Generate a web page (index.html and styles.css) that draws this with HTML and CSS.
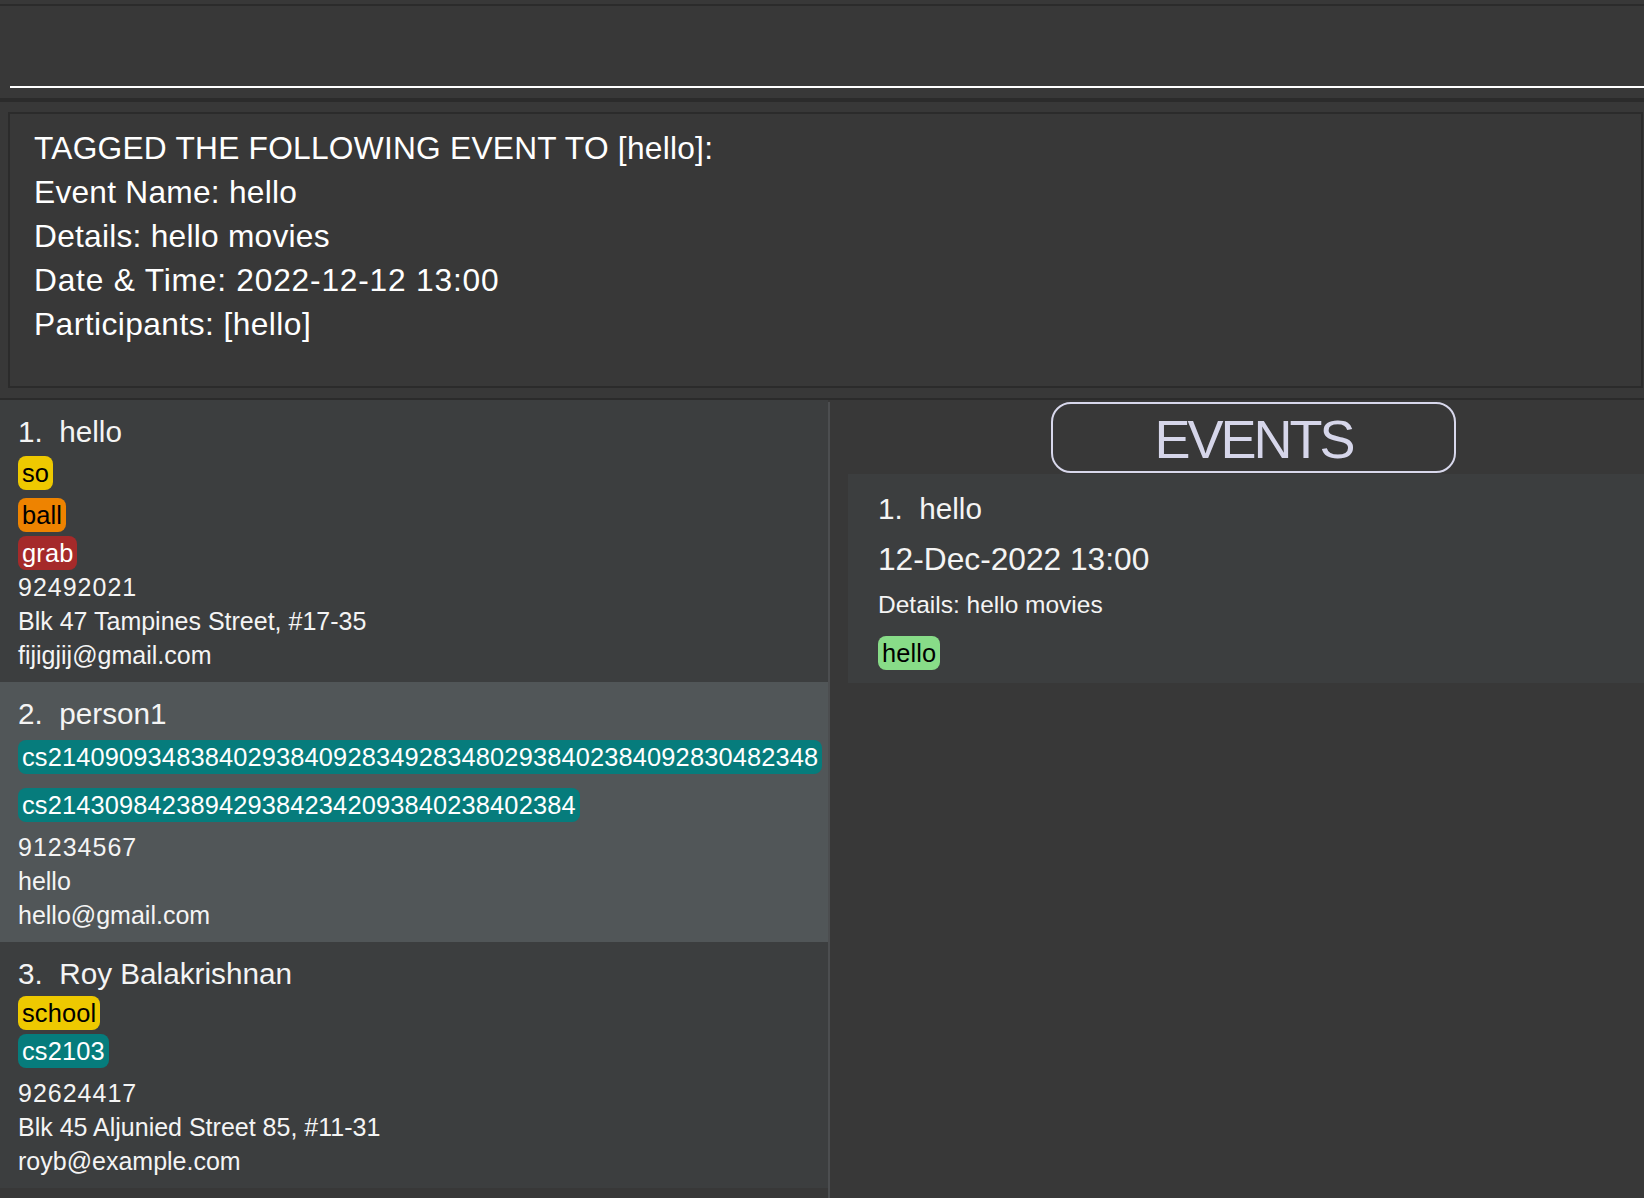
FILE: index.html
```html
<!DOCTYPE html>
<html lang="en">
<head>
<meta charset="utf-8">
<title>Address Book</title>
<link rel="stylesheet" href="styles.css">
</head>
<body>
  <div class="topbar"></div>
  <div class="command">
    <div class="command-input"></div>
  </div>
  <div class="band"></div>
  <div class="result-wrap">
    <div class="result">
      <div>TAGGED THE FOLLOWING EVENT TO [hello]:</div>
      <div>Event Name: hello</div>
      <div>Details: hello movies</div>
      <div class="result-date">Date &amp; Time: 2022-12-12 13:00</div>
      <div class="result-wide">Participants: [hello]</div>
    </div>
  </div>
  <div class="band-thin"></div>
  <div class="main">
    <div class="person-list">
      <div class="person person--even">
        <div class="name">1.  hello</div>
        <div class="tags tags--flush">
          <span class="tag tag--yellow">so</span>
          <span class="tag tag--orange tag--spaced">ball</span>
          <span class="tag tag--red">grab</span>
        </div>
        <div class="field field--phone">92492021</div>
        <div class="field">Blk 47 Tampines Street, #17-35</div>
        <div class="field">fijigjij@gmail.com</div>
      </div>
      <div class="person person--odd">
        <div class="name">2.  person1</div>
        <div class="tags tags--loose">
          <span class="tag tag--teal">cs214090934838402938409283492834802938402384092830482348</span>
          <span class="tag tag--teal">cs2143098423894293842342093840238402384</span>
        </div>
        <div class="field field--phone">91234567</div>
        <div class="field">hello</div>
        <div class="field">hello@gmail.com</div>
      </div>
      <div class="person person--even">
        <div class="name">3.  Roy Balakrishnan</div>
        <div class="tags tags--close">
          <span class="tag tag--yellow">school</span>
          <span class="tag tag--teal">cs2103</span>
        </div>
        <div class="field field--phone">92624417</div>
        <div class="field">Blk 45 Aljunied Street 85, #11-31</div>
        <div class="field">royb@example.com</div>
      </div>
    </div>
    <div class="divider"></div>
    <div class="event-pane">
      <div class="events-title">EVENTS</div>
      <div class="event-card">
        <div class="name">1.  hello</div>
        <div class="event-date">12-Dec-2022 13:00</div>
        <div class="event-details">Details: hello movies</div>
        <div class="event-tags">
          <span class="tag tag--green">hello</span>
        </div>
      </div>
    </div>
  </div>
</body>
</html>
```

FILE: styles.css
```css
* {
  box-sizing: border-box;
  margin: 0;
  padding: 0;
}

html, body {
  background: #383838;
}

body {
  width: 1644px;
  height: 1198px;
  overflow: hidden;
  display: flex;
  flex-direction: column;
  font-family: "Liberation Sans", Arial, sans-serif;
  color: #ffffff;
}

.topbar {
  height: 6px;
  flex: none;
  border-bottom: 2px solid #2b2b2b;
}

.command {
  height: 92px;
  flex: none;
  padding: 0 0 10px 10px;
}

.command-input {
  height: 82px;
  border-bottom: 2px solid #ffffff;
}

.band {
  height: 4px;
  flex: none;
  background: #2b2b2b;
}

.band-thin {
  height: 2px;
  flex: none;
  background: #2b2b2b;
}

.result-wrap {
  flex: none;
  padding: 10px 1px 10px 8px;
}

.result {
  height: 276px;
  border: 2px solid #2b2b2b;
  padding: 12px 24px;
  font-size: 31.7px;
  line-height: 44px;
  letter-spacing: 0.25px;
  color: #ffffff;
}

.result-date {
  letter-spacing: 0.8px;
}

.result-wide {
  letter-spacing: 0.45px;
}

.main {
  flex: 1;
  min-height: 0;
  display: flex;
}

.person-list {
  width: 828px;
  flex: none;
  display: flex;
  flex-direction: column;
}

.divider {
  width: 2px;
  flex: none;
  margin-top: 2px;
  background: #4c4e50;
}

.person {
  padding: 12px 18px 10px;
}

.person--even {
  background: #3c3e3f;
}

.person--odd {
  background: #515658;
}

.name {
  font-size: 29.7px;
  line-height: 40px;
  white-space: pre;
  color: #f4f4f4;
}

.tags {
  display: flex;
  flex-direction: column;
  align-items: flex-start;
  gap: 4px;
  margin: 4px 0 8px;
}

.tags--flush {
  margin-bottom: 0;
}

.tags--loose {
  margin-top: 6px;
  gap: 14px;
}

.tags--close {
  margin-top: 2px;
}

.tag {
  display: inline-block;
  height: 34px;
  line-height: 34px;
  padding: 0 4px;
  border-radius: 8px;
  font-size: 25.4px;
  letter-spacing: 0.15px;
  white-space: nowrap;
}

.tag--spaced {
  margin-top: 4px;
}

.tag--yellow {
  background: #eec900;
  color: #000000;
}

.tag--orange {
  background: #ee8300;
  color: #000000;
}

.tag--red {
  background: #a52a2a;
  color: #ffffff;
}

.tag--teal {
  background: #067c7c;
  color: #ffffff;
}

.tag--green {
  background: #88dc88;
  color: #000000;
}

.field {
  font-size: 25px;
  line-height: 34px;
  color: #f4f4f4;
}

.field--phone {
  letter-spacing: 1px;
}

.event-pane {
  flex: 1;
  padding-top: 2px;
}

.events-title {
  margin-left: 221px;
  width: 405px;
  height: 71px;
  border: 2px solid #d8d8ec;
  border-radius: 20px;
  padding-top: 3px;
  text-align: center;
  font-size: 54px;
  line-height: 64px;
  letter-spacing: -3px;
  color: #d6d6ea;
}

.event-card {
  margin: 1px 0 0 18px;
  padding: 15px 30px 13px;
  background: #3c3e3f;
}

.event-date {
  margin-top: 8px;
  font-size: 31.7px;
  line-height: 44px;
  color: #f4f4f4;
}

.event-details {
  margin-top: 7px;
  font-size: 24.5px;
  line-height: 34px;
  color: #f4f4f4;
}

.event-tags {
  margin-top: 14px;
  display: flex;
}
```
